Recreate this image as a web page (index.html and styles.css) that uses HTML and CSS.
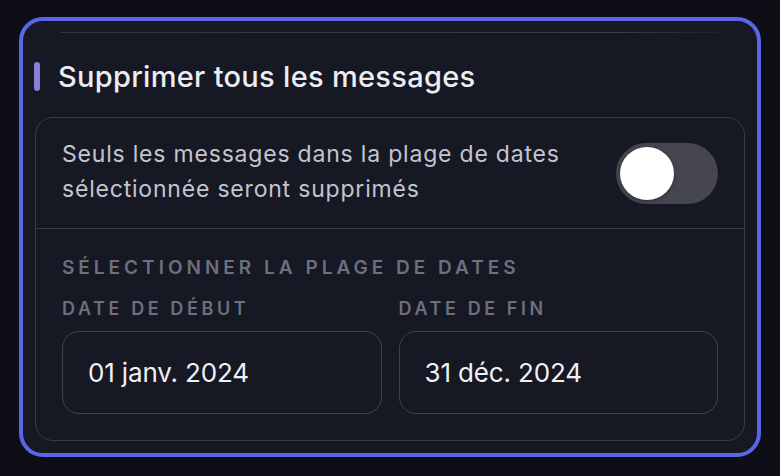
FILE: index.html
```html
<!DOCTYPE html>
<html lang="fr">
<head>
<meta charset="utf-8">
<link rel="stylesheet" href="styles.css">
</head>
<body>
<div class="panel">
  <div class="top-line"></div>
  <div class="header">
    <span class="accent"></span>
    <h2 class="title">Supprimer tous les messages</h2>
  </div>
  <div class="card">
    <div class="toggle-row">
      <p class="desc">Seuls les messages dans la plage de dates sélectionnée seront supprimés</p>
      <div class="switch"><span class="knob"></span></div>
    </div>
    <div class="range">
      <div class="section-label">Sélectionner la plage de dates</div>
      <div class="fields">
        <div class="field">
          <div class="field-label">Date de début</div>
          <div class="input">01 janv. 2024</div>
        </div>
        <div class="field">
          <div class="field-label">Date de fin</div>
          <div class="input">31 déc. 2024</div>
        </div>
      </div>
    </div>
  </div>
</div>
</body>
</html>
```
FILE: styles.css
```css
* { box-sizing: border-box; }
html, body { margin: 0; padding: 0; }
body {
  background: #0d0e16;
  font-family: Inter, "Noto Sans", sans-serif;
  width: 780px;
  height: 476px;
  overflow: hidden;
}
.panel {
  margin: 17px 0 0 19px;
  width: 742px;
  height: 440px;
  border: 4px solid #5a66e8;
  border-radius: 24px;
  background: #161823;
  padding: 0 12px 12px 12px;
  display: flex;
  flex-direction: column;
}
.top-line {
  height: 1px;
  margin: 11px 25px 0 25px;
  background: linear-gradient(90deg, #34363f 0%, #3a3c46 85%, rgba(58,60,70,0.2) 100%);
}
.header {
  display: flex;
  align-items: center;
  height: 84px;
  gap: 18px;
}
.accent {
  width: 6px;
  height: 29px;
  border-radius: 3px;
  background: #8a7dd8;
  margin-left: -1px;
  margin-top: 3px;
}
.title {
  margin: 3px 0 0 0;
  font-size: 29px;
  font-weight: 500;
  color: #ecedf3;
  letter-spacing: 0.3px;
}
.card {
  flex: 1;
  border: 1.5px solid #393b46;
  border-radius: 18px;
  display: flex;
  flex-direction: column;
}
.toggle-row {
  display: flex;
  align-items: center;
  justify-content: space-between;
  height: 111px;
  padding: 0 26px 0 26px;
  border-bottom: 1.5px solid #393b46;
}
.desc {
  margin: -2px 0 0 0;
  font-size: 23px;
  line-height: 35px;
  letter-spacing: 0.8px;
  color: #c3c5cf;
  width: 530px;
}
.switch {
  width: 102px;
  height: 61px;
  border-radius: 31px;
  background: #45464f;
  padding: 4px;
  display: flex;
  flex: none;
}
.knob {
  width: 54px;
  height: 53px;
  border-radius: 50%;
  background: #ffffff;
  box-shadow: 0 1px 4px rgba(0,0,0,0.35);
}
.range {
  padding: 28px 26px 0 26px;
}
.section-label, .field-label {
  font-weight: 600;
  text-transform: uppercase;
  color: #6d6f7e;
  line-height: 22px;
}
.section-label {
  font-size: 19px;
  letter-spacing: 4px;
}
.field-label {
  font-size: 18px;
  letter-spacing: 3.6px;
  margin-bottom: 11px;
}
.fields {
  display: grid;
  grid-template-columns: 1fr 1fr;
  gap: 17px;
  margin-top: 19px;
}
.input {
  height: 83px;
  border: 1.5px solid #3f414c;
  border-radius: 17px;
  display: flex;
  align-items: center;
  padding-left: 25px;
  font-size: 26px;
  color: #f0f0f5;
  letter-spacing: -0.15px;
}
```
